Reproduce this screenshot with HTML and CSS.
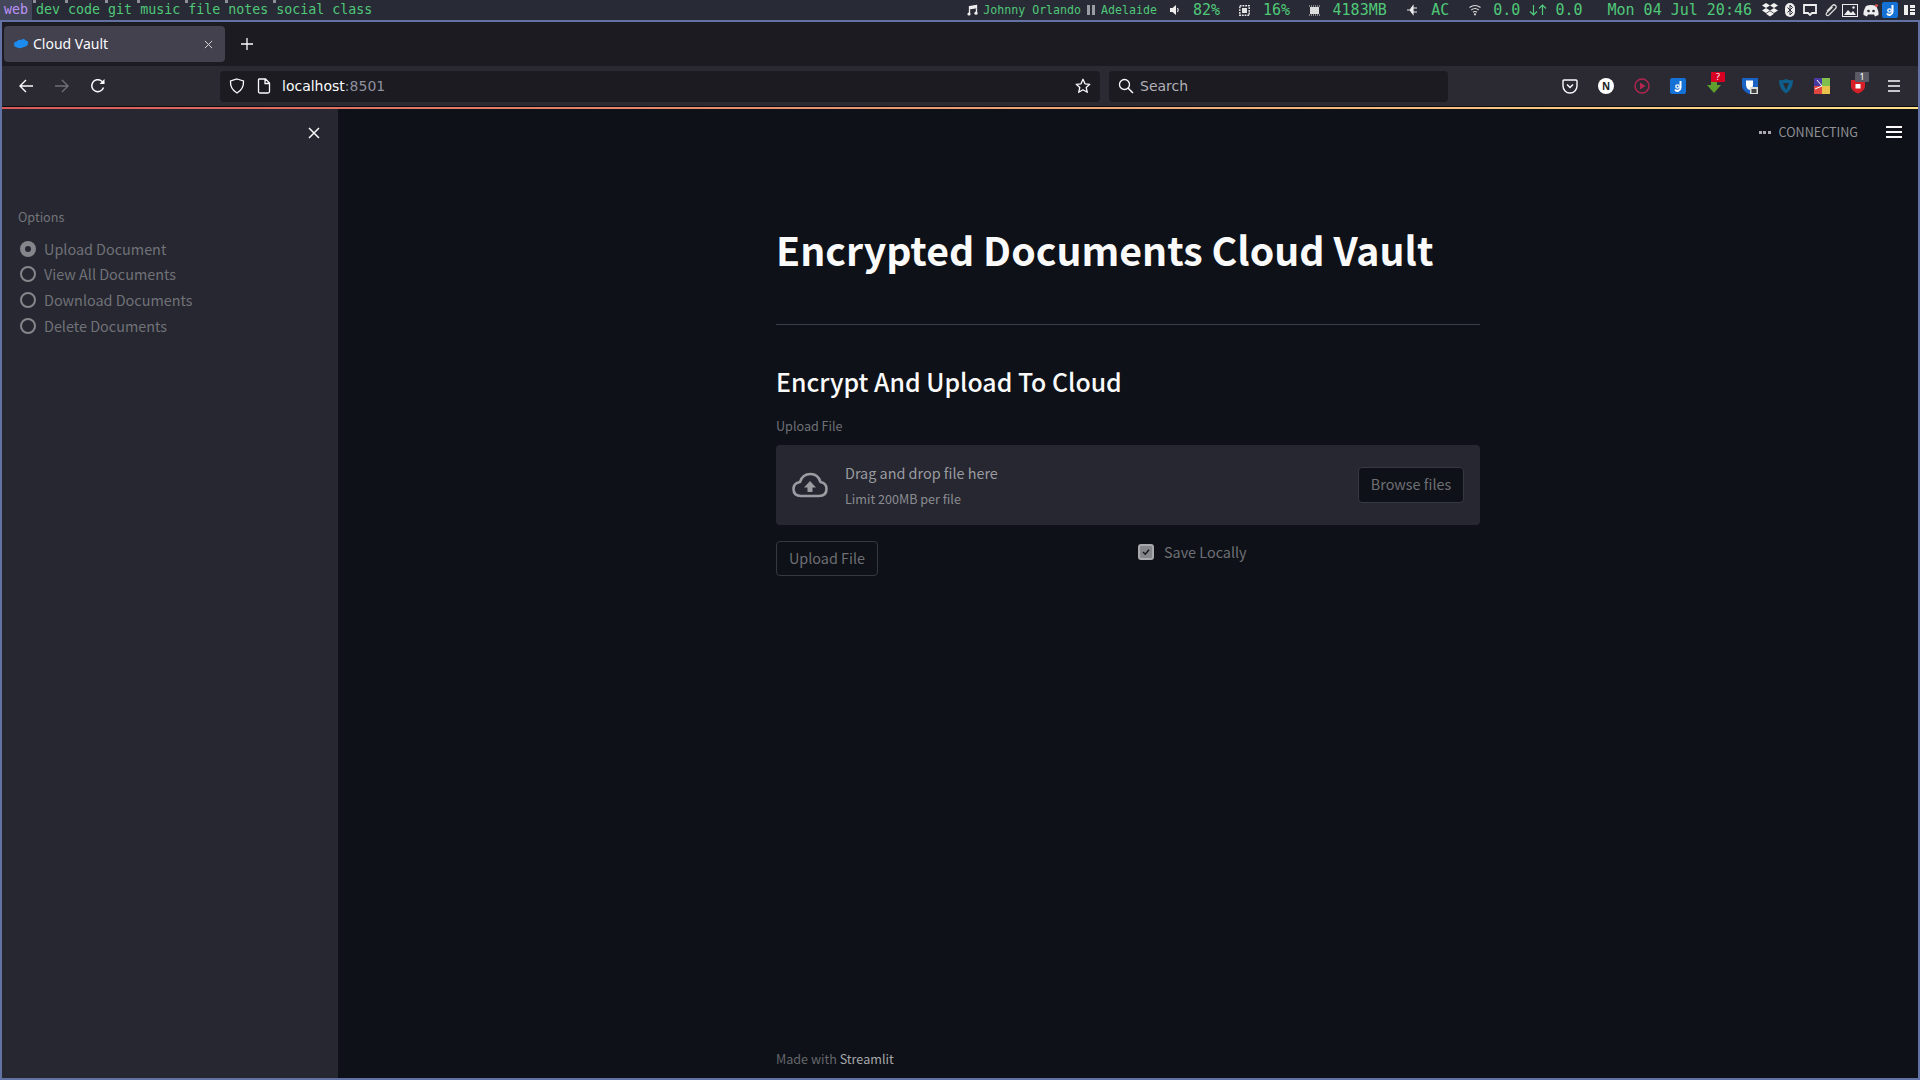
FILE: index.html
```html
<!DOCTYPE html>
<html lang="en">
<head>
<meta charset="utf-8">
<title>Cloud Vault</title>
<link rel="stylesheet" href="styles.css">
</head>
<body>
<header class="wm">
  <nav class="tags">
    <span class="tag active">web</span><span class="tag occ">dev</span><span class="tag occ">code</span><span class="tag occ">git</span><span class="tag occ">music</span><span class="tag occ">file</span><span class="tag occ">notes</span><span class="tag occ">social</span><span class="tag">class</span>
  </nav>
  <div class="status">
    <svg class="si note" viewBox="0 0 12 12"><path d="M2.5 3V10M9.5 2V9M2.5 2.6L9.5 1.5V3.6L2.5 4.7Z" stroke="#eee" fill="#eee" stroke-width="1.3"/><circle cx="2" cy="10" r="1.6" fill="#eee"/><circle cx="9" cy="9.2" r="1.6" fill="#eee"/></svg>
    <span class="song">Johnny Orlando</span>
    <svg class="si pause" viewBox="0 0 8 12"><path d="M0 1H3V11H0ZM5 1H8V11H5Z" fill="#9a9ca3"/></svg>
    <span class="song city">Adelaide</span>
    <svg class="si vol" viewBox="0 0 10 12"><path d="M0 4H2.5L6 1V11L2.5 8H0Z" fill="#eee"/><path d="M7.5 4Q9 6 7.5 8" stroke="#eee" fill="none" stroke-width="1.2"/></svg>
    <span class="val v82">82%</span>
    <svg class="si cpu" viewBox="0 0 11 11"><rect x=".8" y=".8" width="9.400" height="9.400" fill="none" stroke="#e4e4e4" stroke-width="1.500" stroke-dasharray="1.800 .9"/><rect x="3" y="3" width="5" height="5" fill="#e4e4e4"/></svg>
    <span class="val v16">16%</span>
    <svg class="si mem" viewBox="0 0 11 11"><rect x="1" y="2" width="9" height="7" fill="#ddd"/><path d="M0 1H11M0 10H11" stroke="#ddd" stroke-dasharray="1 1"/></svg>
    <span class="val v4183">4183MB</span>
    <svg class="si plug" viewBox="0 0 12 12"><path d="M1 6H4L7 2V10L4 6M7 4H11M7 8H11" stroke="#eee" fill="#eee" stroke-width="1.2"/></svg>
    <span class="val vac">AC</span>
    <svg class="si wifi" viewBox="0 0 12 12"><path d="M.5 3.5Q6 -.5 11.5 3.5M2.3 6Q6 3 9.700 6M4 8.300Q6 6.800 8 8.300" stroke="#ddd" fill="none" stroke-width="1.100"/><circle cx="6" cy="10.300" r="1.100" fill="#ddd"/></svg>
    <span class="val vnet">0.0</span>
    <svg class="si arrows" viewBox="0 0 18 12"><path d="M4.500 1V11M1 7.500L4.500 11L8 7.500M13.500 11V1M10 4.500L13.500 1L17 4.500" stroke="#50c878" fill="none" stroke-width="1.200"/></svg>
    <span class="val vnet2">0.0</span>
    <span class="val clock">Mon 04 Jul 20:46</span>
    <svg class="tray dropbox" viewBox="0 0 16 14"><path d="M4 0L8 2.500L4 5L0 2.500ZM12 0L16 2.500L12 5L8 2.500ZM4 5L8 7.500L4 10L0 7.500ZM12 5L16 7.500L12 10L8 7.500ZM4 10.800L8 8.300L12 10.800L8 13.500Z" fill="#f2f2f2"/></svg>
    <svg class="tray bt" viewBox="0 0 10 14"><rect width="10" height="14" rx="5" fill="#eee"/><path d="M2.500 4.500L7.500 9.500L5 12V2L7.500 4.500L2.500 9.500" stroke="#282a36" fill="none"/></svg>
    <svg class="tray mon" viewBox="0 0 14 12"><path d="M1 1H13V9H9L7 11L5 9H1Z" fill="none" stroke="#eee" stroke-width="1.800"/></svg>
    <svg class="tray clip" viewBox="0 0 14 14"><path d="M3 8L8.500 2.500A2 2 0 0 1 11.500 5.500L5 12A1.300 1.300 0 0 1 2.500 10L8.500 4" fill="none" stroke="#ddd" stroke-width="1.200"/></svg>
    <svg class="tray img" viewBox="0 0 16 13"><rect x=".5" y=".5" width="15" height="12" fill="none" stroke="#eee"/><path d="M2 11L6 6L9 9L11 7L14 11Z" fill="#eee"/><circle cx="11.500" cy="3.500" r="1.200" fill="#eee"/></svg>
    <svg class="tray disc" viewBox="0 0 16 13"><path d="M3 2Q8 0 13 2Q16 7 15.500 11L12 12.500L11 10.500H5L4 12.500L.5 11Q0 7 3 2Z" fill="#eee"/><circle cx="5.500" cy="7" r="1.300" fill="#282a36"/><circle cx="10.500" cy="7" r="1.300" fill="#282a36"/><circle cx="13.500" cy="1.500" r="1.500" fill="#d9534f"/></svg>
    <svg class="tray jop" viewBox="0 0 16 16"><rect width="16" height="16" rx="2" fill="#1471d6"/><path d="M10.500 3V10A3 3 0 0 1 5 11.500" fill="none" stroke="#fff" stroke-width="2"/><circle cx="7.500" cy="8.500" r="1.700" fill="none" stroke="#fff" stroke-width="1.300"/></svg>
    <svg class="tray last" viewBox="0 0 11 12"><path d="M0 1H4V11H0Z" fill="#eee"/><path d="M6 1H11V4H6ZM6 5H11V7H6ZM6 8H11V11H6Z" fill="#eee"/></svg>
  </div>
</header>

<div class="frame">
  <div class="tabbar">
    <div class="tab">
      <svg class="favicon" viewBox="0 0 16 12"><path d="M1 6Q1 3 4 3.500Q5 1 8 2Q11 0 12.500 2.500Q15.500 2.500 15 5Q15 8 11 9Q7 11 4 9.500Q1 9 1 6Z" fill="#1d8cf0"/></svg>
      <span class="tab-title">Cloud Vault</span>
      <svg class="tab-close" viewBox="0 0 10 10"><path d="M1 1L9 9M9 1L1 9" stroke="#d5d5d8" stroke-width="1.100"/></svg>
    </div>
    <svg class="newtab" viewBox="0 0 12 12"><path d="M6 0V12M0 6H12" stroke="#fbfbfe" stroke-width="1.300"/></svg>
  </div>

  <div class="toolbar">
    <div class="nav">
      <svg class="nav-i" viewBox="0 0 16 16"><path d="M15 8H2M8 2L2 8L8 14" fill="none" stroke="#fbfbfe" stroke-width="1.400"/></svg>
      <svg class="nav-i" viewBox="0 0 16 16"><path d="M1 8H14M8 2L14 8L8 14" fill="none" stroke="#6f6f76" stroke-width="1.400"/></svg>
      <svg class="nav-i" viewBox="0 0 16 16"><path d="M13.500 9.500A6 6 0 1 1 11.500 3L14 5" fill="none" stroke="#fbfbfe" stroke-width="1.500"/><path d="M14.500 1V6H9.500Z" fill="#fbfbfe"/></svg>
    </div>
    <div class="urlbar">
      <svg class="url-i shield" viewBox="0 0 16 16"><path d="M8 1L14.500 3Q15 11 8 15Q1 11 1.500 3Z" fill="none" stroke="#fbfbfe" stroke-width="1.300"/></svg>
      <svg class="url-i page" viewBox="0 0 14 16"><path d="M2 1H8.500L12.500 5V13.500Q12.500 15 11 15H3Q1.500 15 1.500 13.500V2Q1.500 1 2 1ZM8 1V5.500H12.500" fill="none" stroke="#fbfbfe" stroke-width="1.300"/></svg>
      <span class="host">localhost<span class="port">:8501</span></span>
      <svg class="url-i star" viewBox="0 0 16 16"><path d="M8 1.300L10 5.800L14.800 6.300L11.200 9.500L12.300 14.300L8 11.800L3.700 14.300L4.800 9.500L1.200 6.300L6 5.800Z" fill="none" stroke="#fbfbfe" stroke-width="1.300" stroke-linejoin="round"/></svg>
    </div>
    <div class="searchbar">
      <svg class="url-i glass" viewBox="0 0 16 16"><circle cx="6.500" cy="6.500" r="5" fill="none" stroke="#fbfbfe" stroke-width="1.300"/><path d="M10 10L15 15" stroke="#fbfbfe" stroke-width="1.500"/></svg>
      <span class="search-text">Search</span>
    </div>
    <div class="exts">
      <svg class="ext" viewBox="0 0 16 16"><path d="M2 2H14Q15 2 15 3V8A7 7 0 0 1 1 8V3Q1 2 2 2Z" fill="none" stroke="#fbfbfe" stroke-width="1.400"/><path d="M5 6.500L8 9.500L11 6.500" fill="none" stroke="#fbfbfe" stroke-width="1.500"/></svg>
      <span class="ext notion">N</span>
      <svg class="ext" viewBox="0 0 16 16"><circle cx="8" cy="8" r="7" fill="none" stroke="#b3264f" stroke-width="1.400"/><path d="M6 4.500L11.500 8L6 11.500Z" fill="#b3264f"/></svg>
      <svg class="ext" viewBox="0 0 16 16"><rect width="16" height="16" rx="2" fill="#1471d6"/><path d="M10.500 3V10A3 3 0 0 1 5 11.500" fill="none" stroke="#fff" stroke-width="2"/><circle cx="7.500" cy="8.500" r="1.700" fill="none" stroke="#fff" stroke-width="1.300"/></svg>
      <span class="ext-wrap">
        <svg class="ext" viewBox="0 0 16 16"><path d="M5 2H11V7H15L8 15L1 7H5Z" fill="#5f9e2f"/></svg>
        <span class="badge red">?</span>
      </span>
      <svg class="ext" viewBox="0 0 16 16"><path d="M0 0H16V16H7Q0 13 0 7Z" fill="#1a62c4"/><path d="M4 2.500H11V8Q10 11 7 12Q4 10 4 7Z" fill="#fff"/><rect x="8" y="9" width="8" height="7" fill="#ddd"/><rect x="9.500" y="11" width="5" height="4" fill="#444"/></svg>
      <svg class="ext" viewBox="0 0 16 16"><path d="M8 1Q12 3 15 2Q15 11 8 15.500Q1 11 1 2Q4 3 8 1Z" fill="#0f5f8c"/><path d="M5 5H11L8 12Z" fill="#2b2a33"/></svg>
      <svg class="ext" viewBox="0 0 16 16"><path d="M0 0H8V8H0Z" fill="#4b3aa0"/><path d="M8 0H16V8H8Z" fill="#7fbf4d"/><path d="M0 8H8V16H0Z" fill="#e0453f"/><path d="M8 8H16V16H8Z" fill="#e8c24a"/><path d="M8 8L3 2M8 8L1 11" stroke="#fff"/></svg>
      <span class="ext-wrap">
        <svg class="ext" viewBox="0 0 16 16"><path d="M1 2H15V9Q14 13 8 15.500Q2 13 1 9Z" fill="#d81e26"/><rect x="5.500" y="6" width="5" height="4.500" fill="#fff"/></svg>
        <span class="badge grey">1</span>
      </span>
      <svg class="ext" viewBox="0 0 16 16"><path d="M2 3H14M2 8H14M2 13H14" stroke="#fbfbfe" stroke-width="1.300"/></svg>
    </div>
  </div>

  <div class="loadline"></div>

  <div class="app">
    <aside class="sidebar">
      <div class="side-head">
        <svg class="side-x" viewBox="0 0 12 12"><path d="M1 1L11 11M11 1L1 11" stroke="#fafafa" stroke-width="1.500"/></svg>
      </div>
      <div class="side-label">Options</div>
      <ul class="radios">
        <li class="radio"><span class="dot on"></span>Upload Document</li>
        <li class="radio"><span class="dot"></span>View All Documents</li>
        <li class="radio"><span class="dot"></span>Download Documents</li>
        <li class="radio"><span class="dot"></span>Delete Documents</li>
      </ul>
    </aside>

    <main class="main">
      <div class="status-row">
        <span class="dots"><i></i><i></i><i></i></span>
        <span class="connecting">CONNECTING</span>
        <svg class="menu" viewBox="0 0 16 12"><path d="M0 1H16M0 6H16M0 11H16" stroke="#fafafa" stroke-width="1.800"/></svg>
      </div>
      <div class="block">
        <h1 class="title">Encrypted Documents Cloud Vault</h1>
        <hr class="rule">
        <h2 class="subtitle">Encrypt And Upload To Cloud</h2>
        <div class="field-label">Upload File</div>
        <section class="drop">
          <svg class="cloud" viewBox="0 0 36 26"><path d="M9 24Q1.500 24 1.500 17Q1.500 11 8 10Q10.500 2 18.500 2Q26 2 28.500 10Q34.500 11 34.500 17Q34.500 24 27 24Z" fill="none" stroke="#9b9ca2" stroke-width="2.600" stroke-linejoin="round"/><path d="M18 9L24 15.500H20.500V20H15.500V15.500H12Z" fill="#9b9ca2"/></svg>
          <div class="drop-text">
            <div class="drop-main">Drag and drop file here</div>
            <div class="drop-sub">Limit 200MB per file</div>
          </div>
          <button class="btn browse">Browse files</button>
        </section>
        <div class="actions">
          <div class="col"><button class="btn upload">Upload File</button></div>
          <div class="col">
            <label class="check">
              <span class="box"><svg viewBox="0 0 16 16"><path d="M4 8L7 11L12 5" fill="none" stroke="#15171c" stroke-width="2"/></svg></span>
              Save Locally
            </label>
          </div>
        </div>
      </div>
      <footer class="foot">Made with <span class="foot-name">Streamlit</span></footer>
    </main>
  </div>
</div>
</body>
</html>
```

FILE: styles.css
```css
* { box-sizing: border-box; }
html, body { height: 100%; }
body {
  margin: 0;
  display: flex;
  flex-direction: column;
  height: 1080px;
  overflow: hidden;
  background: #282a36;
  font-family: "Noto Sans", sans-serif;
}

/* window manager bar */
.wm {
  height: 20px;
  flex: none;
  display: flex;
  justify-content: space-between;
  background: #282a36;
  font-family: "DejaVu Sans Mono", monospace;
  font-size: 13.3px;
  line-height: 19px;
  color: #50c878;
}
.tags { display: flex; }
.tag { padding: 0 4px; height: 20px; position: relative; }
.tag.occ::before {
  content: "";
  position: absolute;
  left: 1px;
  top: 0;
  width: 3px;
  height: 3px;
  background: #8d8f99;
}
.tag.active { background: #44475a; color: #bd93f9; }
.status { display: flex; align-items: center; height: 20px; flex: none; }
.si, .tray { display: block; flex: none; }
.song { font-size: 11.6px; }
.val { flex: none; font-size: 15px; }
.note { width: 12px; height: 12px; margin-right: 4px; }
.pause { width: 8px; height: 12px; margin: 0 6px; }
.vol { width: 10px; height: 12px; margin-left: 13px; margin-right: 13px; }
.cpu { width: 11px; height: 11px; margin: 0 13px 0 19px; }
.mem { width: 11px; height: 11px; margin: 0 13px 0 18.500px; }
.plug { width: 12px; height: 12px; margin: 0 13px 0 19.500px; }
.wifi { width: 12px; height: 12px; margin: 0 12px 0 20px; }
.arrows { width: 18px; height: 12px; margin: 0 8px 0 9px; }
.clock { margin-left: 25px; margin-right: 10px; }
.tray { margin-right: 7px; }
.dropbox { width: 16px; height: 14px; }
.bt { width: 10px; height: 14px; margin-right: 8px; }
.mon { width: 14px; height: 12px; }
.clip { width: 14px; height: 14px; margin-right: 4px; }
.img { width: 16px; height: 13px; margin-right: 5px; }
.disc { width: 16px; height: 13px; margin-right: 3px; }
.jop { width: 16px; height: 16px; margin-right: 6px; }
.last { width: 11px; height: 12px; margin-right: 5px; }

/* browser frame */
.frame {
  flex: 1;
  min-height: 0;
  display: flex;
  flex-direction: column;
  border: 2px solid #6272a4;
  background: #1c1b22;
}
.tabbar {
  height: 44px;
  flex: none;
  display: flex;
  align-items: center;
  padding-left: 2px;
  background: #1c1b22;
}
.tab {
  width: 221px;
  height: 36px;
  display: flex;
  align-items: center;
  padding: 0 12px 0 9px;
  border-radius: 4px;
  background: #42414d;
  color: #fbfbfe;
  font-size: 14px;
  line-height: 20px;
}
.favicon { width: 16px; height: 12px; margin-right: 4px; }
.tab-title { flex: 1; }
.tab-close { width: 9px; height: 9px; }
.newtab { width: 12px; height: 12px; margin-left: 16px; }

.toolbar {
  height: 40px;
  flex: none;
  display: flex;
  align-items: center;
  background: #2b2a33;
}
.nav { display: flex; align-items: center; gap: 20px; padding-left: 16px; width: 218px; }
.nav-i { width: 16px; height: 16px; display: block; }
.urlbar, .searchbar {
  height: 31px;
  display: flex;
  align-items: center;
  background: #1c1b22;
  border-radius: 4px;
}
.urlbar { width: 880px; padding: 0 9px; }
.url-i { display: block; width: 16px; height: 16px; flex: none; }
.page { margin-left: 12px; width: 14px; }
.host { flex: 1; margin-left: 11px; color: #fbfbfe; font-family: "DejaVu Sans", sans-serif; font-size: 14px; line-height: 20px; }
.port { color: #8f8f9d; }
.searchbar { width: 339px; margin-left: 9px; padding: 0 9px; }
.search-text { margin-left: 6px; color: #b0b0b6; font-family: "DejaVu Sans", sans-serif; font-size: 14px; line-height: 20px; }
.exts { display: flex; align-items: center; gap: 20px; margin-left: 114px; }
.ext { display: block; width: 16px; height: 16px; flex: none; }
.notion {
  border-radius: 50%;
  background: #fff;
  color: #222;
  font-size: 10px;
  line-height: 16px;
  font-weight: 700;
  text-align: center;
}
.ext-wrap { position: relative; display: block; }
.badge {
  position: absolute;
  left: 5px;
  top: -6px;
  width: 14px;
  height: 10px;
  border-radius: 1px;
  color: #fff;
  font-size: 9px;
  line-height: 10px;
  text-align: center;
}
.badge.red { background: #d70022; }
.badge.grey { background: #5b5b66; }

.loadline {
  height: 3px;
  flex: none;
  border-top: 1px solid #0c0c10;
  background: linear-gradient(90deg, #d85a5a, #ffe08a);
}

/* streamlit app */
.app {
  flex: 1;
  min-height: 0;
  display: flex;
  font-family: "Noto Sans CJK JP", "Noto Sans", sans-serif;
}
.sidebar {
  width: 336px;
  flex: none;
  background: #262730;
  padding: 0 16px;
}
.side-head { height: 98px; position: relative; }
.side-x { position: absolute; right: 2px; top: 18px; width: 12px; height: 12px; }
.side-label { font-size: 12.6px; line-height: 20px; color: #74757b; }
.radios { list-style: none; margin: 9px 0 0; padding: 0 0 0 2px; }
.radio {
  display: flex;
  align-items: center;
  height: 25.6px;
  font-size: 14.4px;
  line-height: 24px;
  color: #717278;
}
.dot {
  width: 16px;
  height: 16px;
  margin-right: 8px;
  border: 2px solid #85868c;
  border-radius: 50%;
}
.dot.on { border: 5px solid #85868c; background: #262730; }

.main {
  flex: 1;
  min-width: 0;
  display: flex;
  flex-direction: column;
  background: #0e1117;
}
.status-row {
  height: 46px;
  display: flex;
  align-items: center;
  justify-content: flex-end;
  padding-right: 16px;
  flex: none;
}
.dots { display: flex; gap: 1.500px; }
.dots i { width: 3px; height: 3px; background: #aaabb0; display: block; }
.connecting { margin-left: 8px; font-size: 12.6px; line-height: 20px; color: #8f9095; }
.menu { width: 16px; height: 12px; margin-left: 28px; }
.block { width: 704px; margin: 0 auto; flex: 1; }
.title {
  margin: 64px 0 0;
  font-size: 39.25px;
  line-height: 60px;
  font-weight: 700;
  color: #fafafa;
  white-space: nowrap;
}
.rule { margin: 45px 0 0; border: 0; border-top: 1px solid #3c3e47; }
.subtitle {
  margin: 37px 0 0;
  font-size: 24.85px;
  line-height: 38px;
  font-weight: 500;
  color: #fafafa;
}
.field-label { margin-top: 16px; font-size: 12.6px; line-height: 20px; color: #6f7177; }
.drop {
  margin-top: 9px;
  height: 80px;
  display: flex;
  align-items: center;
  padding: 0 16px;
  border-radius: 4px;
  background: #262730;
}
.cloud { width: 36px; height: 26px; flex: none; }
.drop-text { flex: 1; margin-left: 17px; }
.drop-main { font-size: 14.4px; line-height: 24px; color: #9a9ba1; }
.drop-sub { margin-top: 4px; font-size: 12.6px; line-height: 20px; color: #8b8c92; }
.btn {
  font-family: inherit;
  font-size: 14.4px;
  line-height: 24px;
  background: #0e1117;
  color: #6e6f74;
  border: 1px solid #373940;
  border-radius: 4px;
  padding: 0 0 2px;
  white-space: nowrap;
}
.browse { width: 106px; height: 36px; }
.upload { width: 102px; height: 35px; }
.actions { display: flex; gap: 16px; margin-top: 16px; }
.col { flex: 1; }
.check { display: flex; align-items: center; margin-top: 1px; height: 20px; font-size: 14.4px; line-height: 24px; color: #6f7076; }
.box {
  width: 16px;
  height: 16px;
  margin-right: 10px;
  margin-left: 2px;
  border-radius: 3px;
  background: #85868c;
  border: 2px solid #a8a9ad;
  display: block;
}
.box svg { display: block; width: 12px; height: 12px; }
.foot {
  width: 704px;
  margin: 0 auto;
  height: 30px;
  padding-top: 1px;
  flex: none;
  font-size: 12.6px;
  line-height: 20px;
  color: #64666b;
}
.foot-name { color: #a7a8ac; }
```
